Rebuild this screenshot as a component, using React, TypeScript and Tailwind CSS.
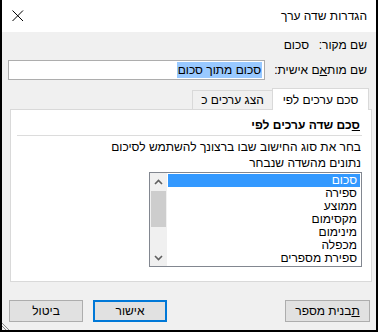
import React from "react";

const font = { fontFamily: '"Liberation Sans", "DejaVu Sans", sans-serif' };

const items = ["סכום", "ספירה", "ממוצע", "מקסימום", "מינימום", "מכפלה", "ספירת מספרים"];

const Chevron = ({ up }: { up?: boolean }) => (
	<svg width="9" height="6" viewBox="0 0 9 6" className="block">
		<path
			d={up ? "M1 5 L4.5 1.5 L8 5" : "M1 1 L4.5 4.5 L8 1"}
			fill="none"
			stroke="#606060"
			strokeWidth="1.6"
		/>
	</svg>
);

const ListBox = () => (
	<div className="mr-[9px] mt-px flex h-[95px] w-[213px] border border-[#828790] bg-white">
		<div className="flex-1 p-px">
			{items.map((item, i) => (
				<div
					key={item}
					className={
						i === 0
							? "h-[13px] bg-[#3399ff] pr-[3px] text-[12px] leading-[13px] text-white"
							: "h-[13px] pr-[3px] text-[12px] leading-[13px] text-black"
					}
				>
					{item}
				</div>
			))}
		</div>
		<div className="flex w-[17px] flex-col bg-[#f0f0f0]">
			<div className="flex h-[17px] items-center justify-center">
				<Chevron up />
			</div>
			<div className="mx-px mt-px h-[36px] bg-[#cdcdcd]" />
			<div className="flex-1" />
			<div className="flex h-[17px] items-center justify-center">
				<Chevron />
			</div>
		</div>
	</div>
);

const Button = ({
	children,
	primary,
	width,
}: {
	children: React.ReactNode;
	primary?: boolean;
	width: string;
}) => (
	<div
		className={
			primary
				? `flex h-[22px] ${width} items-center justify-center border-2 border-[#0078d7] bg-[#e1e1e1] text-[12px]`
				: `flex h-[22px] ${width} items-center justify-center border border-[#adadad] bg-[#e1e1e1] text-[12px]`
		}
	>
		{children}
	</div>
);

export default function App() {
	return (
		<div
			dir="rtl"
			style={font}
			className="relative flex h-[332px] w-[378px] flex-col overflow-hidden border-x-2 border-b-2 border-black bg-[#f0f0f0] text-black"
		>
			{/* title bar */}
			<div className="flex h-[32px] shrink-0 items-center bg-white pr-[9px] pl-[10px]">
				<span className="text-[12px] leading-none">הגדרות שדה ערך</span>
				<div className="flex-1" />
				<svg width="12" height="12" viewBox="0 0 12 12">
					<path d="M0.5 0.5 L11 11 M11 0.5 L0.5 11" stroke="#000" strokeWidth="1" />
				</svg>
			</div>

			{/* source name */}
			<div className="mt-[5px] flex h-[16px] items-center pr-[9px] text-[12px]">
				<span className="w-[58px] shrink-0">שם מקור:</span>
				<span>סכום</span>
			</div>

			{/* custom name */}
			<div className="mt-[7px] flex h-[20px] items-center pr-[9px] pl-[6px] text-[12px]">
				<span className="w-[102px] shrink-0">
					שם מות<span className="underline">א</span>ם אישית:
				</span>
				<div className="flex h-[20px] flex-1 items-center border border-[#adadad] bg-white pr-[2px]">
					<span className="bg-[#99c9ff] px-px leading-[16px]">סכום מתוך סכום</span>
				</div>
			</div>

			{/* tabs */}
			<div className="mt-[8px] flex h-[21px] items-end pr-[7px] text-[12px]">
				<div className="relative z-10 -mb-px flex h-[22px] w-[97px] items-center justify-center border-x border-t border-[#d9d9d9] bg-white">
					סכם ערכים לפי
				</div>
				<div className="flex h-[19px] w-[80px] items-center justify-center border-t border-l border-[#d9d9d9] bg-[#f0f0f0]">
					הצג ערכים כ
				</div>
			</div>

			{/* panel */}
			<div className="mr-[4px] ml-[8px] flex h-[173px] flex-col border border-[#d9d9d9] bg-white text-[12px]">
				<div className="mt-[7px] h-[16px] pr-[11px] font-bold leading-[16px]">
					<span className="underline">ס</span>כם שדה ערכים לפי
				</div>
				<div className="mt-[2px] mr-[9px] ml-[6px] h-px bg-[#dcdcdc]" />
				<div className="mt-[3px] pr-[10px] leading-[16px]">
					<div>בחר את סוג החישוב שבו ברצונך להשתמש לסיכום</div>
					<div>נתונים מהשדה שנבחר</div>
				</div>
				<ListBox />
			</div>

			{/* buttons */}
			<div className="mt-[18px] flex pr-[6px] pl-[7px]">
				<Button width="w-[85px]">
					<span>
						<span className="underline">ת</span>בנית מספר
					</span>
				</Button>
				<div className="flex-1" />
				<Button primary width="w-[74px]">
					אישור
				</Button>
				<div className="w-[10px]" />
				<Button width="w-[74px]">ביטול</Button>
			</div>

			{/* resize grip */}
			<svg
				width="8"
				height="8"
				viewBox="0 0 8 8"
				className="absolute bottom-0 left-0"
			>
				<path d="M0 1 L7 8 M0 4 L4 8" stroke="#8a8a8a" strokeWidth="1" />
			</svg>
		</div>
	);
}
